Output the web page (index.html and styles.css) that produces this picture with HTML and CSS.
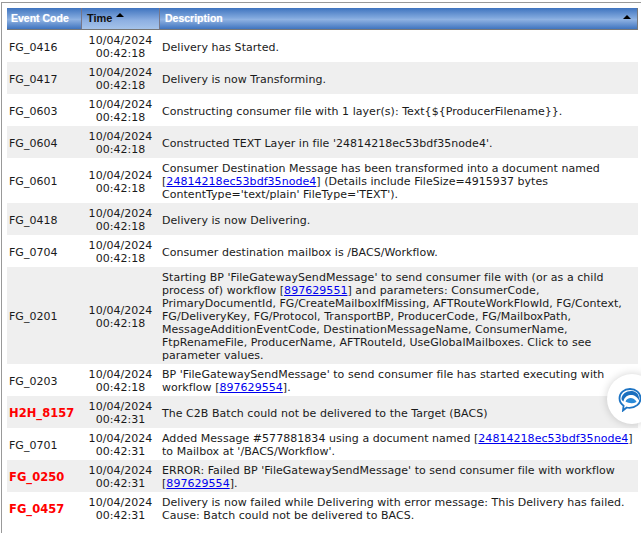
FILE: index.html
```html
<!DOCTYPE html>
<html lang="en">
<head>
<meta charset="utf-8">
<title>Event Log</title>
<link rel="stylesheet" href="styles.css">
</head>
<body>
<div class="frame">
<table class="events">
<thead>
<tr>
<th class="col-code">Event Code</th>
<th class="col-time sorted">Time <span class="sort-mark"></span></th>
<th class="col-desc">Description<span class="sort-mark end"></span></th>
</tr>
</thead>
<tbody>
<tr><td class="code">FG_0416</td><td class="time">10/04/2024<br>00:42:18</td><td>Delivery has Started.</td></tr>
<tr class="alt"><td class="code">FG_0417</td><td class="time">10/04/2024<br>00:42:18</td><td>Delivery is now Transforming.</td></tr>
<tr><td class="code">FG_0603</td><td class="time">10/04/2024<br>00:42:18</td><td>Constructing consumer file with 1 layer(s): Text{${ProducerFilename}}.</td></tr>
<tr class="alt"><td class="code">FG_0604</td><td class="time">10/04/2024<br>00:42:18</td><td>Constructed TEXT Layer in file '24814218ec53bdf35node4'.</td></tr>
<tr><td class="code">FG_0601</td><td class="time">10/04/2024<br>00:42:18</td><td>Consumer Destination Message has been transformed into a document named [<a href="#">24814218ec53bdf35node4</a>] (Details include FileSize=4915937 bytes ContentType='text/plain' FileType='TEXT').</td></tr>
<tr class="alt"><td class="code">FG_0418</td><td class="time">10/04/2024<br>00:42:18</td><td>Delivery is now Delivering.</td></tr>
<tr><td class="code">FG_0704</td><td class="time">10/04/2024<br>00:42:18</td><td>Consumer destination mailbox is /BACS/Workflow.</td></tr>
<tr class="alt"><td class="code">FG_0201</td><td class="time">10/04/2024<br>00:42:18</td><td>Starting BP 'FileGatewaySendMessage' to send consumer file with (or as a child process of) workflow [<a href="#">897629551</a>] and parameters: ConsumerCode, PrimaryDocumentId, FG/CreateMailboxIfMissing, AFTRouteWorkFlowId, FG/Context, FG/DeliveryKey, FG/Protocol, TransportBP, ProducerCode, FG/MailboxPath, MessageAdditionEventCode, DestinationMessageName, ConsumerName, FtpRenameFile, ProducerName, AFTRouteId, UseGlobalMailboxes. Click to see parameter values.</td></tr>
<tr><td class="code">FG_0203</td><td class="time">10/04/2024<br>00:42:18</td><td>BP 'FileGatewaySendMessage' to send consumer file has started executing with workflow [<a href="#">897629554</a>].</td></tr>
<tr class="alt"><td class="code error">H2H_8157</td><td class="time">10/04/2024<br>00:42:31</td><td>The C2B Batch could not be delivered to the Target (BACS)</td></tr>
<tr><td class="code">FG_0701</td><td class="time">10/04/2024<br>00:42:31</td><td>Added Message #577881834 using a document named [<a href="#">24814218ec53bdf35node4</a>] to Mailbox at '/BACS/Workflow'.</td></tr>
<tr class="alt"><td class="code error">FG_0250</td><td class="time">10/04/2024<br>00:42:31</td><td>ERROR: Failed BP 'FileGatewaySendMessage' to send consumer file with workflow [<a href="#">897629554</a>].</td></tr>
<tr><td class="code error">FG_0457</td><td class="time">10/04/2024<br>00:42:31</td><td>Delivery is now failed while Delivering with error message: This Delivery has failed. Cause: Batch could not be delivered to BACS.</td></tr>
</tbody>
</table>
</div>
<button class="chat" type="button" aria-label="Chat">
<svg viewBox="0 0 24 24" width="24" height="25"><path d="M12 1.500c6 0 10.500 4 10.500 9.300 0 5.500-5 9.500-11 9.500-1 0-2-.1-2.800-.3L5 23l.6-4.800C3 16.500 1.500 13.800 1.500 10.800 1.500 5.500 6 1.500 12 1.500z" fill="#fff" stroke="#1d74c4" stroke-width="1.800"/><path d="M3.500 11C4 6 9 3 14 3.500c4 .4 7 3.500 7 7 0 .8-.1 1.500-.4 2.200C19.500 9 15.500 7 12 7.500c-3.500.5-6 3-6.500 6.500-1.300-.8-2.100-1.800-2-3z" fill="#1a6fbe"/><path d="M7.500 14c1-3 5-4.500 8-2.800 1.500.8 2.600 2 3 3.300-3.500 1.800-7.500 1.500-11-.5z" fill="#2a8ad8"/></svg>
</button>
</body>
</html>
```
FILE: styles.css
```css
html, body { margin: 0; padding: 0; background: #fff; }
body { height: 533px; overflow: hidden; position: relative; font-family: "DejaVu Sans", sans-serif; }
.frame { margin: 2px 0 0 1px; height: 540px; box-sizing: border-box; border-top: 1px solid #999; border-left: 1px solid #999; padding: 5px 0 0 5px; }
.events { border-collapse: separate; border-spacing: 0; table-layout: fixed; width: 631px; font-size: 11px; letter-spacing: .04px; line-height: 13px; color: #1a1a1a; }
.events th { box-sizing: border-box; height: 22px; padding: 0 3px 0 4px; text-align: left; font-family: "Liberation Sans", sans-serif; font-weight: bold; font-size: 10.5px; letter-spacing: 0; color: #fff; text-shadow: 0 0 1px rgba(255,255,255,.5); background: linear-gradient(#3f74bf, #7ea6dc 45%, #8fb2e2 55%, #3f74bf); border-bottom: 1px solid #777; position: relative; }
.col-code { width: 74px; }
.col-time { width: 79px; }
.events th.sorted { color: #111; text-shadow: none; background: linear-gradient(#3f74bf, #8eb0e2 60%, #a5c3ea); border-left: 1px solid #778; border-right: 1px solid #778; padding-left: 5px; font-size: 11px; }
.events th.col-desc { border-right: 1px solid #777; padding-left: 5px; }
.sort-mark { display: inline-block; width: 0; height: 0; border: 4px solid transparent; border-top: 0; border-bottom: 4px solid #000; vertical-align: 5px; }
.sort-mark.end { position: absolute; right: 6px; top: 7px; }
.events td { padding: 4px 2px 2px; vertical-align: middle; }
.events tr.alt td { background: #efefef; }
.events td.time { text-align: center; }
.events td.error { color: #f00; font-weight: bold; font-size: 11.5px; }
.events a { color: #00e; }
.chat { position: absolute; right: -16px; top: 374px; width: 50px; height: 50px; border: 0; border-radius: 50%; background: #fff; box-shadow: 0 0 8px rgba(0,0,0,.18); padding: 0 0 0 11px; display: flex; align-items: center; }
```
